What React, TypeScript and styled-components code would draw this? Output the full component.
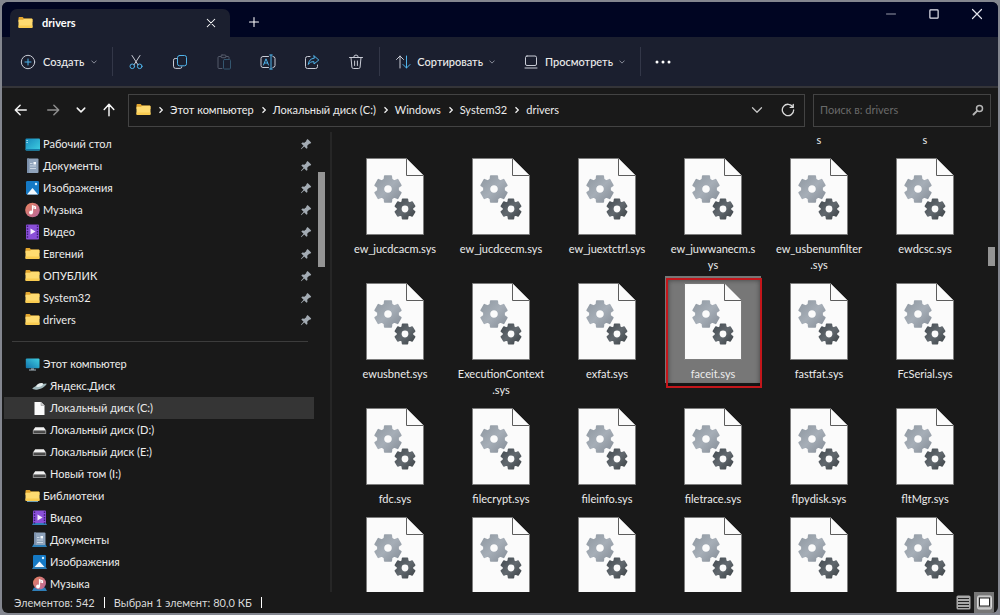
import React from "react";
import styled, { createGlobalStyle } from "styled-components";

const GlobalStyle = createGlobalStyle`
  * { box-sizing: border-box; }
  body {
    margin: 0;
    background: #83868f;
    color: #ececec;
    font-family: Lato, "Open Sans", sans-serif;
    font-size: 11px;
    line-height: 16px;
  }
  button, input { font: inherit; color: inherit; }
  svg { display: block; flex: none; }
`;

const Desktop = styled.div`
  height: 100vh;
  padding: 2px;
`;

const Window = styled.main`
  height: 100%;
  display: flex;
  flex-direction: column;
  overflow: hidden;
  border-radius: 6px;
  background: #191919;
`;

const IconButton = styled.button<{ $w?: number; $h?: number }>`
  display: flex;
  flex: none;
  align-items: center;
  justify-content: center;
  width: ${(p) => p.$w ?? 24}px;
  height: ${(p) => p.$h ?? 24}px;
  padding: 0;
  border: 0;
  background: transparent;
`;

/* Title bar */

const TitleBar = styled.header`
  display: flex;
  flex: none;
  height: 35px;
  padding-left: 8px;
  background: #000522;
`;

const Tab = styled.div`
  display: flex;
  align-items: center;
  width: 220px;
  margin-top: 7px;
  padding: 0 7px 0 8px;
  gap: 9px;
  border-radius: 7px 7px 0 0;
  background: #1b1f2f;
  color: #ffffff;
  font-weight: 700;
`;

const TabTitle = styled.span`
  flex: 1;
`;

const NewTab = styled.div`
  padding: 8px 0 0 12px;
`;

const Caption = styled.div`
  display: flex;
  margin-left: auto;
`;

/* Command bar */

const CommandBar = styled.div`
  display: flex;
  flex: none;
  align-items: center;
  height: 51px;
  padding-left: 14px;
  border-bottom: 2px solid #343438;
  background: #1b1f2f;
`;

const Command = styled.button<{ $gap: number }>`
  display: flex;
  align-items: center;
  gap: ${(p) => p.$gap}px;
  height: 32px;
  padding: 0 4px;
  border: 0;
  background: transparent;
  font-weight: 500;
  white-space: nowrap;
`;

const CommandGroup = styled.div<{ $gap: number; $pad: number }>`
  display: flex;
  align-items: center;
  gap: ${(p) => p.$gap}px;
  padding: 0 ${(p) => p.$pad}px;
`;

const Divider = styled.span`
  width: 1px;
  height: 29px;
  background: #333748;
`;

/* Address row */

const AddressRow = styled.div`
  display: flex;
  flex: none;
  align-items: center;
  height: 44px;
  padding: 0 7px;
  gap: 8px;
`;

const History = styled.nav`
  display: flex;
  width: 111px;
  align-items: center;
  gap: 8px;
`;

const AddressBox = styled.div`
  display: flex;
  flex: 1;
  align-items: center;
  height: 33px;
  padding: 0 4px 0 7px;
  border: 1px solid #434343;
`;

const Crumbs = styled.ol`
  display: flex;
  flex: 1;
  margin: 0;
  padding: 0;
  list-style: none;
`;

const Crumb = styled.li`
  display: flex;
  align-items: center;

  svg { margin: 0 5px 0 6px; }
  a { color: inherit; text-decoration: none; white-space: nowrap; }
`;

const SearchBox = styled.label`
  display: flex;
  align-items: center;
  width: 178px;
  height: 33px;
  padding: 0 6px;
  border: 1px solid #434343;

  input {
    flex: 1;
    min-width: 0;
    padding: 0;
    border: 0;
    outline: 0;
    background: transparent;
  }
  input::placeholder { color: #6a6a6a; opacity: 1; }
`;

/* Body */

const Body = styled.div`
  display: flex;
  flex: 1;
  min-height: 0;
`;

const Sidebar = styled.aside`
  display: flex;
  flex: none;
  width: 330px;
  padding-left: 2px;
  overflow: hidden;
  border-right: 2px solid #262626;
`;

const Tree = styled.nav`
  flex: 1;
  padding-top: 1px;
`;

const TreeList = styled.ul`
  margin: 0;
  padding: 0;
  list-style: none;
`;

const TreeRow = styled.a<{ $level: number; $active?: boolean }>`
  display: flex;
  align-items: center;
  height: 22px;
  gap: 3px;
  padding: 0 1px 0 ${(p) => (p.$level ? 28 : 21)}px;
  background: ${(p) => (p.$active ? "#353535" : "transparent")};
  color: inherit;
  text-decoration: none;

  span { flex: 1; }
`;

const TreeRule = styled.hr`
  height: 1px;
  margin: 10px 6px 11px 8px;
  border: 0;
  background: #3c3c3c;
`;

const TreeTrack = styled.div`
  flex: none;
  width: 16px;
  padding: 40px 0 0 4px;
`;

const Thumb = styled.div<{ $h: number }>`
  width: 7px;
  height: ${(p) => p.$h}px;
  background: #949494;
`;

const Files = styled.section`
  display: flex;
  flex: 1;
  min-width: 0;
  overflow: hidden;
`;

const FileGrid = styled.ul`
  display: grid;
  flex: 1;
  grid-template-columns: repeat(auto-fill, 96px);
  align-content: start;
  gap: 2px 10px;
  margin: 0;
  padding: 0 0 0 15px;
  list-style: none;
`;

const File = styled.li<{ $selected?: boolean }>`
  position: relative;
  display: flex;
  flex-direction: column;
  align-items: center;
  align-self: start;
  gap: 6px;
  padding: 7px 0 1px;
  background: ${(p) => (p.$selected ? "#777777" : "transparent")};
  text-align: center;
`;

const Remainder = styled.li`
  height: 17px;
  text-align: center;
`;

const Line = styled.span`
  display: block;
  white-space: nowrap;
`;

const Highlight = styled.span`
  position: absolute;
  inset: 2px -1px -5px 1px;
  border: 2px solid #c3161b;
  box-shadow: inset 0 0 5px rgba(0, 0, 0, 0.45);
`;

const FileTrack = styled.div`
  flex: none;
  width: 10px;
  padding-top: 115px;
`;

/* Status bar */

const StatusBar = styled.footer`
  display: flex;
  flex: none;
  align-items: center;
  height: 21px;
  padding: 0 4px 0 12px;
  gap: 9px;
  color: #d8d8d8;
`;

const StatusMark = styled.span`
  width: 1px;
  height: 11px;
  background: #ffffff;
`;

const ViewModes = styled.div`
  display: flex;
  align-items: center;
  margin-left: auto;
`;

const ViewButton = styled(IconButton)<{ $on?: boolean }>`
  background: ${(p) => (p.$on ? "#777777" : "transparent")};
`;

/* Icons */

type StrokeProps = { size?: number; color?: string; width?: number; children: React.ReactNode };

const Stroke = ({ size = 16, color = "#c9ccd6", width = 1, children }: StrokeProps) => (
  <svg
    width={size}
    height={size}
    viewBox="0 0 16 16"
    fill="none"
    stroke={color}
    strokeWidth={width}
    strokeLinecap="round"
    strokeLinejoin="round"
    aria-hidden
  >
    {children}
  </svg>
);

const BLUE = "#4fb3ea";

const ChevronDown = ({ size = 6, color = "#aeb2be", width = 2 }) => (
  <Stroke size={size} color={color} width={width}>
    <path d="M2 5l6 6 6-6" />
  </Stroke>
);

const ChevronRight = () => (
  <svg width="8" height="8" viewBox="0 0 8 8" fill="none" stroke="#f0f0f0" strokeWidth="1.3" aria-hidden>
    <path d="M2.5 1.2L5.3 4 2.5 6.8" />
  </svg>
);

const Folder = ({ library = false }) => (
  <svg width="15" height="14" viewBox="0 0 15 14" aria-hidden>
    <path d="M.5 2.2c0-.7.4-1.2 1-1.2h3.2l1.3 1.5h7.5c.6 0 1 .4 1 1V6H.5z" fill="#e2a52e" />
    <path d="M.5 3.8h4.6l1-1h7.6c.5 0 .8.3.8.8v7.5c0 .5-.3.9-.8.9H1.3c-.5 0-.8-.4-.8-.9z" fill="#ffdb70" />
    <path d="M.5 9.5h14v1.6c0 .5-.3.9-.8.9H1.3c-.5 0-.8-.4-.8-.9z" fill="#f9cb50" />
    {library && <path d="M2 12h11v1H2z" fill="#6f9fb5" />}
  </svg>
);

const DesktopIcon = () => (
  <svg width="15" height="15" viewBox="0 0 15 15" aria-hidden>
    <defs>
      <linearGradient id="desktop" x1="0" y1="0" x2="1" y2="1">
        <stop offset="0" stopColor="#1789bd" />
        <stop offset="1" stopColor="#3fcfe2" />
      </linearGradient>
    </defs>
    <rect x=".5" y="1.500" width="14.5" height="12" rx="1" fill="url(#desktop)" />
    <path d="M1.5 3.500h1.2M1.5 5.500h1.2" stroke="#c9f3fb" />
    <path d="M.5 12h14.5v.5a1 1 0 0 1-1 1h-12.500a1 1 0 0 1-1-1z" fill="#157aa8" />
  </svg>
);

const PcIcon = () => (
  <svg width="15" height="15" viewBox="0 0 15 15" aria-hidden>
    <defs>
      <linearGradient id="pc" x1="0" y1="1" x2="1" y2="0">
        <stop offset="0" stopColor="#1273ab" />
        <stop offset="1" stopColor="#3fcfe2" />
      </linearGradient>
    </defs>
    <rect x=".8" y="1.500" width="13.700" height="9.800" rx="1" fill="url(#pc)" />
    <path d="M6 11.300h3v1.500H6z" fill="#8398a4" />
    <path d="M4 12.500h7v1H4z" fill="#a9bbc4" />
  </svg>
);

const LibraryBase = () => <path d="M0 15l2-3.500h11l2 3.500z" fill="#2f7fb8" />;

const DocumentsIcon = ({ library = false }) => (
  <svg width="15" height="16" viewBox="0 0 15 16" aria-hidden>
    {library && <LibraryBase />}
    <rect x="2" y=".5" width="11.500" height={library ? 12.500 : 14.500} rx="1" fill="#8fa3bb" />
    <rect x="2" y=".5" width="2" height={library ? 12.500 : 14.500} fill="#7b90ab" />
    <path d="M5 5.500h2.500M5 8h6M5 10.500h6" stroke="#dbe4ef" strokeWidth=".8" />
    <rect x="8.500" y="4" width="2.500" height="2.500" fill="#f7fbff" />
  </svg>
);

const PicturesIcon = ({ library = false }) => (
  <svg width="15" height="16" viewBox="0 0 15 16" aria-hidden>
    {library && <LibraryBase />}
    <rect x="1" y="1" width="13" height={library ? 12 : 13.500} rx="1.200" fill="#1579c4" />
    <path d={library ? "M2.500 13l5-5.500 5 5.500z" : "M2 14.500l5.500-6.500 5.500 6.500z"} fill="#f3f9ff" />
    <circle cx="11" cy="4" r="1.200" fill="#d7efff" />
  </svg>
);

const MusicIcon = ({ library = false }) => (
  <svg width="15" height="16" viewBox="0 0 15 16" aria-hidden>
    <defs>
      <linearGradient id="music" x1="0" y1="0" x2="1" y2="1">
        <stop offset="0" stopColor="#e8825c" />
        <stop offset="1" stopColor="#b7679e" />
      </linearGradient>
    </defs>
    {library && <LibraryBase />}
    <circle cx="7.500" cy={library ? 7 : 8} r={library ? 6.500 : 7.300} fill="url(#music)" />
    <path d="M7.500 10.500V3.800l3 1.200v1.500l-3-1" fill="none" stroke="#fff" strokeWidth="1.200" />
    <circle cx="6" cy="10.500" r="1.900" fill="#fff" />
  </svg>
);

const VideoIcon = ({ library = false }) => (
  <svg width="15" height="16" viewBox="0 0 15 16" aria-hidden>
    {library && <LibraryBase />}
    <rect x="1" y=".500" width="13" height={library ? 12.500 : 15} rx="1" fill="#8a4fd8" />
    <path d="M2.500 1.500v13M12.500 1.500v13" stroke="#3d1c78" strokeWidth="1.400" strokeDasharray="1.500 1.200" />
    <path d="M5.500 4.500v6l5-3z" fill="#f6edff" />
  </svg>
);

const YandexIcon = () => (
  <svg width="15" height="15" viewBox="0 0 15 15" aria-hidden>
    <path d="M.3 9.600C2 7.500 8 4.600 14.500 4.500c.5 1.500-4 5.200-8.500 6-2.500.4-4.800.2-5.700-.9z" fill="#9fb6ba" />
    <path d="M4 7.500c.8-2.400 3-3.700 6.300-3.500.7.300.9 1.300.2 2.300-1.500 1.500-4.500 2-6.500 1.200z" fill="#e8f1f2" />
  </svg>
);

const PageIcon = () => (
  <svg width="15" height="15" viewBox="0 0 15 15" aria-hidden>
    <path d="M2.500 1h6.500l3.500 3.500V14h-10z" fill="#fbfbfb" />
    <path d="M9 1v3.500h3.500" fill="#cfcfcf" stroke="#8a8a8a" strokeWidth=".5" />
  </svg>
);

const DriveIcon = () => (
  <svg width="15" height="15" viewBox="0 0 15 15" aria-hidden>
    <path d="M3.200 4.300h8.600l2.400 3.500H.8z" fill="#f1f1f1" />
    <rect x=".8" y="7.300" width="13.400" height="3.700" rx=".6" fill="#8b8b8b" />
    <rect x="1.800" y="8.200" width="11.400" height="1.700" fill="#3d3d3d" />
  </svg>
);

const PinIcon = () => (
  <svg width="14" height="14" viewBox="0 0 14 14" aria-hidden>
    <path
      d="M7.300 3.200L8.600 2l3.600 3.600-1 1.200-1-.1-2 2.100.3 2.100-1 .9-2.300-2.300-2.700 2.500-.6.200.2-.7 2.500-2.700L2.300 6.500l1-.9 2.100.2 2-1.900z"
      fill="#a3abb3"
    />
  </svg>
);

const gearPath = (cx: number, cy: number, outer: number, inner: number, hole: number) => {
  const at = (radius: number, degrees: number) => {
    const a = ((degrees - 90) * Math.PI) / 180;
    return `${(cx + radius * Math.cos(a)).toFixed(2)} ${(cy + radius * Math.sin(a)).toFixed(2)}`;
  };
  const points: string[] = [];
  for (let i = 0; i < 6; i++) {
    const a = i * 60;
    points.push(at(inner, a - 21), at(outer, a - 14), at(outer, a + 14), at(inner, a + 21));
  }
  return (
    `M${points.join("L")}Z` +
    `M${cx - hole} ${cy}a${hole} ${hole} 0 1 0 ${hole * 2} 0a${hole} ${hole} 0 1 0 ${-hole * 2} 0Z`
  );
};

const BIG_GEAR = gearPath(22, 31, 13.4, 10.2, 4.6);
const SMALL_GEAR = gearPath(39, 51, 10, 7.6, 4.2);

const SysFileIcon = () => (
  <svg width="58" height="77" viewBox="0 0 58 77" aria-hidden>
    <defs>
      <linearGradient id="gearLight" x1="0" y1="0" x2="1" y2="1">
        <stop offset="0" stopColor="#8f98a1" />
        <stop offset=".5" stopColor="#a6aeb7" />
        <stop offset="1" stopColor="#868e98" />
      </linearGradient>
      <linearGradient id="gearDark" x1="0" y1="0" x2="1" y2="1">
        <stop offset="0" stopColor="#434a50" />
        <stop offset=".5" stopColor="#62696f" />
        <stop offset="1" stopColor="#3d4347" />
      </linearGradient>
    </defs>
    <path d="M.5.5h40l17 17v59H.5z" fill="#fbfbfb" stroke="#7d7d7d" />
    <path d="M40.500.5v17h17" fill="#fbfbfb" stroke="#5c5c5c" />
    <g fillRule="evenodd" strokeLinejoin="round" strokeWidth="1.600">
      <path d={BIG_GEAR} fill="url(#gearLight)" stroke="url(#gearLight)" />
      <path d={SMALL_GEAR} fill="url(#gearDark)" stroke="url(#gearDark)" />
    </g>
  </svg>
);

/* Data */

const quickAccess = [
  { name: "Рабочий стол", icon: <DesktopIcon /> },
  { name: "Документы", icon: <DocumentsIcon /> },
  { name: "Изображения", icon: <PicturesIcon /> },
  { name: "Музыка", icon: <MusicIcon /> },
  { name: "Видео", icon: <VideoIcon /> },
  { name: "Евгений", icon: <Folder /> },
  { name: "ОПУБЛИК", icon: <Folder /> },
  { name: "System32", icon: <Folder /> },
  { name: "drivers", icon: <Folder /> },
];

const places = [
  { name: "Этот компьютер", icon: <PcIcon />, level: 0 },
  { name: "Яндекс.Диск", icon: <YandexIcon />, level: 1 },
  { name: "Локальный диск (C:)", icon: <PageIcon />, level: 1, active: true },
  { name: "Локальный диск (D:)", icon: <DriveIcon />, level: 1 },
  { name: "Локальный диск (E:)", icon: <DriveIcon />, level: 1 },
  { name: "Новый том (I:)", icon: <DriveIcon />, level: 1 },
  { name: "Библиотеки", icon: <Folder library />, level: 0 },
  { name: "Видео", icon: <VideoIcon library />, level: 1 },
  { name: "Документы", icon: <DocumentsIcon library />, level: 1 },
  { name: "Изображения", icon: <PicturesIcon library />, level: 1 },
  { name: "Музыка", icon: <MusicIcon library />, level: 1 },
];

const crumbs = ["Этот компьютер", "Локальный диск (C:)", "Windows", "System32", "drivers"];

const remainders = ["", "", "", "", "s", "s"];

const files: string[][] = [
  ["ew_jucdcacm.sys"],
  ["ew_jucdcecm.sys"],
  ["ew_juextctrl.sys"],
  ["ew_juwwanecm.s", "ys"],
  ["ew_usbenumfilter", ".sys"],
  ["ewdcsc.sys"],
  ["ewusbnet.sys"],
  ["ExecutionContext", ".sys"],
  ["exfat.sys"],
  ["faceit.sys"],
  ["fastfat.sys"],
  ["FcSerial.sys"],
  ["fdc.sys"],
  ["filecrypt.sys"],
  ["fileinfo.sys"],
  ["filetrace.sys"],
  ["flpydisk.sys"],
  ["fltMgr.sys"],
  [],
  [],
  [],
  [],
  [],
  [],
];

export default function App() {
  return (
    <Desktop>
      <GlobalStyle />
      <Window>
        <TitleBar>
          <Tab>
            <Folder />
            <TabTitle>drivers</TabTitle>
            <IconButton aria-label="Закрыть вкладку">
              <Stroke size={12} color="#ffffff" width={1.4}>
                <path d="M3 3l10 10M13 3L3 13" />
              </Stroke>
            </IconButton>
          </Tab>
          <NewTab>
            <IconButton aria-label="Новая вкладка">
              <Stroke size={12} color="#ffffff" width={1.4}>
                <path d="M8 2v12M2 8h12" />
              </Stroke>
            </IconButton>
          </NewTab>
          <Caption>
            <IconButton $w={42} aria-label="Свернуть">
              <Stroke size={12}>
                <path d="M2 8h12" />
              </Stroke>
            </IconButton>
            <IconButton $w={43} aria-label="Развернуть">
              <Stroke size={12} color="#e4e5ee" width={1.6}>
                <rect x="2.500" y="2.500" width="11" height="11" rx="1" />
              </Stroke>
            </IconButton>
            <IconButton $w={43} aria-label="Закрыть">
              <Stroke size={12} color="#e4e5ee" width={1.6}>
                <path d="M2 2l12 12M14 2L2 14" />
              </Stroke>
            </IconButton>
          </Caption>
        </TitleBar>

        <CommandBar>
          <Command $gap={7}>
            <Stroke>
              <circle cx="8" cy="8" r="6.700" />
              <path d="M8 5v6M5 8h6" stroke={BLUE} />
            </Stroke>
            Создать
            <ChevronDown />
          </Command>
          <CommandGroup $gap={20} $pad={11}>
            <Divider />
          </CommandGroup>
          <CommandGroup $gap={20} $pad={0}>
            <IconButton aria-label="Вырезать">
              <Stroke>
                <path d="M4 1.500l6 9.300M12 1.500L6 10.800" />
                <circle cx="4.300" cy="12.300" r="2.300" stroke={BLUE} />
                <circle cx="11.700" cy="12.300" r="2.300" stroke={BLUE} />
              </Stroke>
            </IconButton>
            <IconButton aria-label="Копировать">
              <Stroke>
                <path d="M4.500 4.500H3.200A1.700 1.700 0 0 0 1.500 6.200v6a2.200 2.200 0 0 0 2.200 2.200h4.500a1.700 1.700 0 0 0 1.700-1.700" />
                <rect x="5.500" y="1.500" width="9" height="10.300" rx="2" stroke={BLUE} />
              </Stroke>
            </IconButton>
            <IconButton aria-label="Вставить" disabled>
              <Stroke color="#555b6b">
                <path d="M5 2.500H3a1 1 0 0 0-1 1V13.500a1 1 0 0 0 1 1h3M10 2.500h2a1 1 0 0 1 1 1v1" />
                <rect x="5" y="1" width="5" height="2.700" rx="1" />
                <rect x="7.500" y="5.500" width="7" height="9.500" rx="1" stroke="#34566f" />
              </Stroke>
            </IconButton>
            <IconButton aria-label="Переименовать">
              <Stroke>
                <path d="M8.500 2.500H3A2 2 0 0 0 1 4.500v7a2 2 0 0 0 2 2h5.500M13 2.500a2 2 0 0 1 2 2v7a2 2 0 0 1-2 2" />
                <path d="M3.500 11L6 4.800 8.500 11M4.300 9h3.400M11 1v14M9.700 1h2.600M9.700 15h2.600" stroke={BLUE} />
              </Stroke>
            </IconButton>
            <IconButton aria-label="Поделиться">
              <Stroke>
                <path d="M6 2.500H3.500a2 2 0 0 0-2 2v8a2 2 0 0 0 2 2h8a2 2 0 0 0 2-2v-1.500" />
                <path d="M10 1.800L14.800 6 10 10V7.700C7 7.600 5.500 8.500 4.300 10.500 4.600 7 6.500 4.500 10 4.200z" stroke={BLUE} />
              </Stroke>
            </IconButton>
            <IconButton aria-label="Удалить">
              <Stroke>
                <path d="M1.500 3.500h13M5.700 3.300a2.300 2.300 0 0 1 4.600 0M3 3.500l.9 9.700a1.500 1.500 0 0 0 1.500 1.300h5.200a1.500 1.500 0 0 0 1.500-1.300L13 3.500M6.600 7v4.500M9.400 7v4.500" />
              </Stroke>
            </IconButton>
          </CommandGroup>
          <CommandGroup $gap={10} $pad={11}>
            <Divider />
          </CommandGroup>
          <CommandGroup $gap={20} $pad={0}>
            <Command $gap={6}>
              <Stroke>
                <path d="M1.500 5.500L5 2l3.500 3.500M5 2v12" />
                <path d="M8 10.500l3.500 3.500 3.500-3.500M11.500 14V2" stroke={BLUE} />
              </Stroke>
              Сортировать
              <ChevronDown />
            </Command>
            <Command $gap={6}>
              <Stroke>
                <rect x="2.500" y="2" width="11" height="9.500" rx="1.500" />
                <path d="M2 14h12" />
              </Stroke>
              Просмотреть
              <ChevronDown />
            </Command>
          </CommandGroup>
          <CommandGroup $gap={10} $pad={11}>
            <Divider />
            <IconButton aria-label="Дополнительно">
              <svg width="16" height="16" viewBox="0 0 16 16" fill="#ffffff" aria-hidden>
                <circle cx="2" cy="8" r="1.500" />
                <circle cx="8" cy="8" r="1.500" />
                <circle cx="14" cy="8" r="1.500" />
              </svg>
            </IconButton>
          </CommandGroup>
        </CommandBar>

        <AddressRow>
          <History aria-label="Журнал">
            <IconButton aria-label="Назад">
              <Stroke size={14} color="#f4f4f4" width={1.7}>
                <path d="M14 8H2M7 2.500L1.500 8 7 13.500" />
              </Stroke>
            </IconButton>
            <IconButton aria-label="Вперёд">
              <Stroke size={14} color="#8e8e8e" width={1.7}>
                <path d="M2 8h12M9 2.500L14.500 8 9 13.500" />
              </Stroke>
            </IconButton>
            <IconButton $w={16} aria-label="Последние места">
              <ChevronDown size={10} color="#f4f4f4" width={2.4} />
            </IconButton>
            <IconButton aria-label="Вверх">
              <Stroke size={14} color="#f4f4f4" width={1.7}>
                <path d="M8 14.500V2M2.500 7.500L8 1.500l5.500 6" />
              </Stroke>
            </IconButton>
          </History>
          <AddressBox>
            <Folder />
            <Crumbs>
              {crumbs.map((name) => (
                <Crumb key={name}>
                  <ChevronRight />
                  <a href="#">{name}</a>
                </Crumb>
              ))}
            </Crumbs>
            <IconButton $w={38} aria-label="История адресов">
              <ChevronDown size={12} color="#c4c4c4" width={1.7} />
            </IconButton>
            <IconButton aria-label="Обновить">
              <Stroke size={14} color="#d8d8d8" width={1.5}>
                <path d="M13.500 4.500A6.500 6.500 0 1 0 14.500 8M14 1.500v3.500h-3.500" />
              </Stroke>
            </IconButton>
          </AddressBox>
          <SearchBox>
            <input type="search" placeholder="Поиск в: drivers" aria-label="Поиск в: drivers" />
            <Stroke size={12} color="#b5b5b5" width={2}>
              <circle cx="10" cy="6" r="4" />
              <path d="M6.500 9.500L2 14" strokeWidth="2.600" />
            </Stroke>
          </SearchBox>
        </AddressRow>

        <Body>
          <Sidebar>
            <Tree aria-label="Область переходов">
              <TreeList>
                {quickAccess.map((item) => (
                  <li key={item.name}>
                    <TreeRow href="#" $level={0}>
                      {item.icon}
                      <span>{item.name}</span>
                      <PinIcon />
                    </TreeRow>
                  </li>
                ))}
              </TreeList>
              <TreeRule />
              <TreeList>
                {places.map((item) => (
                  <li key={item.name}>
                    <TreeRow href="#" $level={item.level} $active={item.active}>
                      {item.icon}
                      <span>{item.name}</span>
                    </TreeRow>
                  </li>
                ))}
              </TreeList>
            </Tree>
            <TreeTrack>
              <Thumb $h={95} />
            </TreeTrack>
          </Sidebar>
          <Files aria-label="Файлы">
            <FileGrid>
              {remainders.map((text, i) => (
                <Remainder key={i}>{text}</Remainder>
              ))}
              {files.map((lines, i) => (
                <File key={i} $selected={lines[0] === "faceit.sys"}>
                  <SysFileIcon />
                  {lines.length > 0 && (
                    <span>
                      {lines.map((line) => (
                        <Line key={line}>{line}</Line>
                      ))}
                    </span>
                  )}
                  {lines[0] === "faceit.sys" && <Highlight />}
                </File>
              ))}
            </FileGrid>
            <FileTrack>
              <Thumb $h={19} />
            </FileTrack>
          </Files>
        </Body>

        <StatusBar>
          <span>Элементов: 542</span>
          <StatusMark />
          <span>Выбран 1 элемент: 80,0 КБ</span>
          <StatusMark />
          <ViewModes>
            <ViewButton $w={22} $h={21} aria-label="Таблица">
              <svg width="15" height="15" viewBox="0 0 15 15" aria-hidden>
                <rect x=".5" y=".5" width="14" height="14" rx="1.500" fill="#a8a8a8" />
                <path d="M2 3.500h11M2 6.500h11M2 9.500h11M2 12.500h11" stroke="#222222" />
              </svg>
            </ViewButton>
            <ViewButton $w={20} $h={21} $on aria-label="Крупные значки">
              <svg width="15" height="15" viewBox="0 0 15 15" aria-hidden>
                <rect x=".5" y="1" width="14" height="13" rx="1.500" fill="#b5b5b5" stroke="#d9d9d9" />
                <rect x="2.500" y="3" width="10" height="8" fill="#ffffff" stroke="#222222" />
              </svg>
            </ViewButton>
          </ViewModes>
        </StatusBar>
      </Window>
    </Desktop>
  );
}
